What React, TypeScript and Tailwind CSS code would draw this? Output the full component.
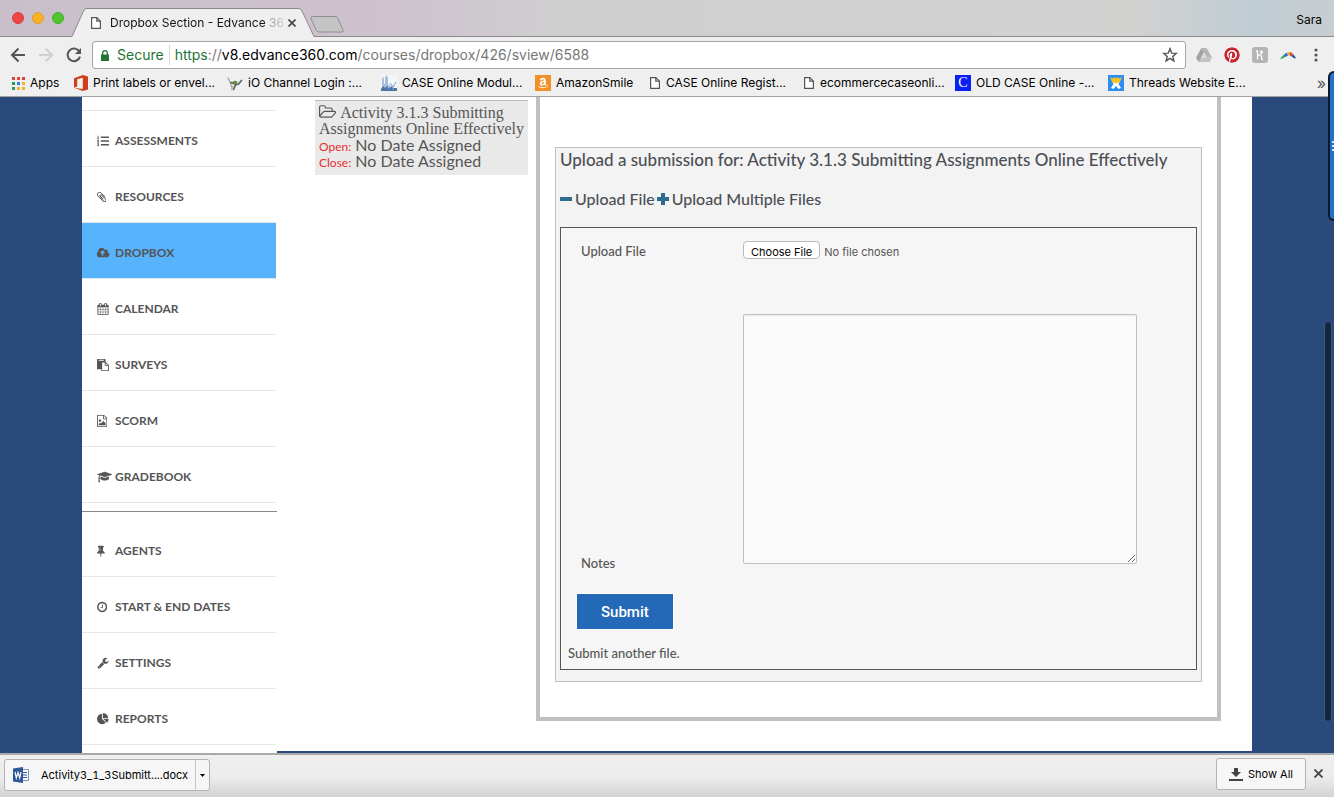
import type { ReactNode } from "react";
import { FaListOl, FaAmazon, FaPinterest } from "react-icons/fa";

type GlyphProps = { d: string; box?: string; className?: string };

function Glyph({ d, box = "0 0 1792 1792", className = "h-3" }: GlyphProps) {
  return (
    <svg viewBox={box} className={className} fill="currentColor" aria-hidden="true">
      <path d={d} />
    </svg>
  );
}

const CLIP =
  "M1596 1385q0 117-79 196t-196 79q-135 0-235-100l-777-776q-113-115-113-271 0-159 110-270t269-111q158 0 273 113l605 606q10 10 10 22 0 16-30.5 46.5t-46.5 30.5q-13 0-23-10l-606-607q-79-77-181-77-106 0-179 75t-73 181q0 105 76 181l776 777q63 63 145 63 64 0 106-42t42-106q0-82-63-145l-581-581q-26-24-60-24-29 0-48 19t-19 48q0 32 25 59l410 410q10 10 10 22 0 16-31 47t-47 31q-12 0-22-10l-410-410q-63-61-63-149 0-82 57-139t139-57q88 0 149 63l581 581q100 98 100 235z";
const IMAGE_FILE =
  "M1596 380q28 28 48 76t20 88v1152q0 40-28 68t-68 28h-1344q-40 0-68-28t-28-68v-1600q0-40 28-68t68-28h896q40 0 88 20t76 48zm-444-244v376h376q-10-29-22-41l-313-313q-12-12-41-22zm384 1528v-1024h-416q-40 0-68-28t-28-68v-416h-768v1536h1280zm-128-448v320h-1024v-192l192-192 128 128 384-384zm-832-192q-80 0-136-56t-56-136 56-136 136-56 136 56 56 136-56 136-136 56z";
const CLOUD =
  "M1216 864q0-14-9-23l-352-352q-9-9-23-9t-23 9l-351 351q-10 12-10 24 0 14 9 23t23 9h224v352q0 13 9.5 22.5t22.5 9.5h192q13 0 22.5-9.5t9.5-22.5v-352h224q13 0 22.5-9.5t9.5-22.5zm640 288q0 159-112.5 271.5t-271.5 112.5h-1088q-185 0-316.5-131.5t-131.5-316.5q0-130 70-240t188-165q-2-30-2-43 0-212 150-362t362-150q156 0 285.5 87t188.5 231q71-62 166-62 106 0 181 75t75 181q0 76-41 138 130 31 213.5 135.5t83.5 238.5z";
const CALENDAR =
  "M192 1664h288v-288h-288v288zm352 0h320v-288h-320v288zm-352-352h288v-320h-288v320zm352 0h320v-320h-320v320zm-352-384h288v-288h-288v288zm736 736h320v-288h-320v288zm-384-736h320v-288h-320v288zm768 736h288v-288h-288v288zm-384-352h320v-320h-320v320zm-352-864v-288q0-13-9.5-22.5t-22.5-9.5h-64q-13 0-22.5 9.5t-9.5 22.5v288q0 13 9.5 22.5t22.5 9.5h64q13 0 22.5-9.5t9.5-22.5zm736 864h288v-320h-288v320zm-384-384h320v-288h-320v288zm384 0h288v-288h-288v288zm32-480v-288q0-13-9.5-22.5t-22.5-9.5h-64q-13 0-22.5 9.5t-9.5 22.5v288q0 13 9.5 22.5t22.5 9.5h64q13 0 22.5-9.5t9.5-22.5zm384-64v1280q0 52-38 90t-90 38h-1408q-52 0-90-38t-38-90v-1280q0-52 38-90t90-38h128v-96q0-66 47-113t113-47h64q66 0 113 47t47 113v96h384v-96q0-66 47-113t113-47h64q66 0 113 47t47 113v96h128q52 0 90 38t38 90z";
const PASTE =
  "M768 1664h896v-640h-416q-40 0-68-28t-28-68v-416h-384v1152zm256-1440v-64q0-13-9.5-22.5t-22.5-9.5h-704q-13 0-22.5 9.5t-9.5 22.5v64q0 13 9.5 22.5t22.5 9.5h704q13 0 22.5-9.5t9.5-22.5zm256 672h299l-299-299v299zm512 128v672q0 40-28 68t-68 28h-960q-40 0-68-28t-28-68v-160h-544q-40 0-68-28t-28-68v-1344q0-40 28-68t68-28h1088q40 0 68 28t28 68v328q21 13 36 28l408 408q28 28 48 76t20 88z";
const CAP =
  "M1774 836l18 316q4 69-82 128t-235 93.5-323 34.5-323-34.5-235-93.5-82-128l18-316 574 181q22 7 48 7t48-7zm530-324q0 23-22 31l-1120 352q-4 1-10 1t-10-1l-652-206q-43 34-71 111.5t-34 178.5q63 36 63 109 0 69-58 107l58 433q2 14-8 25-9 11-24 11h-192q-15 0-24-11-10-11-8-25l58-433q-58-38-58-107 0-73 65-111 11-207 98-330l-333-104q-22-8-22-31t22-31l1120-352q4-1 10-1t10 1l1120 352q22 8 22 31z";
const PIN =
  "M800 864v-448q0-14-9-23t-23-9-23 9-9 23v448q0 14 9 23t23 9 23-9 9-23zm672 352q0 26-19 45t-45 19h-429l-51 483q-2 12-10.5 20.5t-20.5 8.5h-1q-27 0-32-27l-76-485h-404q-26 0-45-19t-19-45q0-123 78.5-221.5t177.5-98.5v-512q-52 0-90-38t-38-90 38-90 90-38h640q52 0 90 38t38 90-38 90-90 38v512q99 0 177.5 98.5t78.5 221.5z";
const CLOCK =
  "M1024 544v448q0 14-9 23t-23 9h-320q-14 0-23-9t-9-23v-64q0-14 9-23t23-9h224v-352q0-14 9-23t23-9h64q14 0 23 9t9 23zm416 352q0-148-73-273t-198-198-273-73-273 73-198 198-73 273 73 273 198 198 273 73 273-73 198-198 73-273zm224 0q0 209-103 385.5t-279.5 279.5-385.5 103-385.5-103-279.5-279.5-103-385.5 103-385.5 279.5-279.5 385.5-103 385.5 103 279.5 279.5 103 385.5z";
const WRENCH =
  "M448 1472q0-26-19-45t-45-19-45 19-19 45 19 45 45 19 45-19 19-45zm644-420l-682 682q-37 37-90 37-52 0-91-37l-106-108q-38-36-38-90 0-53 38-91l681-681q39 98 114.5 173.5t173.5 114.5zm634-435q0 39-23 106-47 134-164.5 217.5t-258.5 83.5q-185 0-316.5-131.5t-131.5-316.5 131.5-316.5 316.5-131.5q58 0 121.5 16.5t107.5 46.5q16 11 16 28t-16 28l-293 169v224l193 107q5-3 79-48.5t135.5-81 70.5-35.5q15 0 23.5 10t8.5 25z";
const PIE =
  "M768 890l546 546q-106 108-247.5 168t-298.5 60q-209 0-385.5-103t-279.5-279.5-103-385.5 103-385.5 279.5-279.5 385.5-103v762zm187 6h773q0 157-60 298.5t-168 247.5zm709-128h-768v-768q209 0 385.5 103t279.5 279.5 103 385.5z";
const FOLDER =
  "M1845 931q0-35-53-35h-1088q-40 0-85.5 21.5t-71.5 52.5l-294 363q-18 24-18 40 0 35 53 35h1088q40 0 86-22t71-53l294-363q18-22 18-39zm-1141-163h768v-160q0-40-28-68t-68-28h-576q-40 0-68-28t-28-68v-64q0-40-28-68t-68-28h-320q-40 0-68 28t-28 68v853l256-315q44-53 116-87.5t140-34.5zm1269 163q0 62-46 120l-295 363q-43 53-116 87.5t-140 34.5h-1088q-92 0-158-66t-66-158v-960q0-92 66-158t158-66h320q92 0 158 66t66 158v32h544q92 0 158 66t66 158v160h192q54 0 99 24.5t67 70.5q15 32 15 68z";

function PageIcon({ className = "h-3.5 w-3" }: { className?: string }) {
  return (
    <svg viewBox="0 0 12 14" className={className} fill="#fff" stroke="#555" strokeWidth="1.2" aria-hidden="true">
      <path d="M1.6 1.6h5.2l3.6 3.6v7.2H1.6z" />
      <path d="M6.8 1.6v3.6h3.6" fill="none" />
    </svg>
  );
}

function AppsIcon() {
  const colors = ["#dc4437", "#dc4437", "#dc4437", "#2e9e58", "#2f7de1", "#f2b32a", "#2e9e58", "#f2b32a", "#f2b32a"];
  return (
    <svg viewBox="0 0 13 13" className="h-[13px] w-[13px]" aria-hidden="true">
      {colors.map((fill, i) => (
        <rect key={i} x={(i % 3) * 5} y={Math.floor(i / 3) * 5} width="3" height="3" fill={fill} />
      ))}
    </svg>
  );
}

function OfficeIcon() {
  return (
    <svg viewBox="0 0 14 16" className="h-4 w-3.5" aria-hidden="true">
      <path fill="#d03f1b" d="M0 3.2 8.8 0 14 1.5v13L8.800 16 0 12.8l8.800 1.1V2.800L3.200 4.200v7.200L0 12.800z" />
    </svg>
  );
}

function ChannelIcon() {
  return (
    <svg viewBox="0 0 16 16" className="h-4 w-4" fill="none" strokeLinecap="round" aria-hidden="true">
      <path d="M1 3c1.500 2 2.500 4 3.500 9" stroke="#999" strokeWidth="1.200" />
      <path d="M14.500 5.500l-3 3.500-3 1-2 4.500" stroke="#666" strokeWidth="1.800" />
      <path d="M4 7.500l4 1.500" stroke="#555" strokeWidth="1.500" />
      <ellipse cx="8" cy="7.500" rx="2.500" ry="1.800" fill="#5f9136" />
      <path d="M6 11 4.500 14.500" stroke="#b9b9b9" strokeWidth="1.500" />
    </svg>
  );
}

function SkylineIcon() {
  return (
    <svg viewBox="0 0 16 16" className="h-4 w-4" aria-hidden="true">
      <path fill="#f3f6fa" d="M0 0h16v16H0z" />
      <path fill="#a9bfd8" d="M1 16V4l1-3 1 3v5h1V2l1.500-2L7 3v7h2v6z" />
      <path fill="#4b74a8" d="M0 16v-2l2-3 2 2 2-2 2 3 2-3 2 2h4v3z" />
      <path stroke="#7f9cc0" d="M9 8l3 4 3-5M12 12v3" fill="none" />
    </svg>
  );
}

function ThreadsIcon() {
  return (
    <svg viewBox="0 0 16 16" className="h-4 w-4" aria-hidden="true">
      <path fill="#2c8df5" d="M0 0h16v16H0z" />
      <path fill="#fff" d="M4 6h8l-1.500 3L13 13l-2.500 1L8 11l-2.500 3L3 13l2.500-4z" />
      <path fill="#f9c21c" d="M2 2l3 1.500L6.500 2 8 3.500 9.500 2 11 3.500 14 2l-2 5-4 1.500L4 7z" />
    </svg>
  );
}

const bookmarks: { label: string; icon: ReactNode; width: string }[] = [
  { label: "Apps", icon: <AppsIcon />, width: "w-[62px]" },
  { label: "Print labels or envel...", icon: <OfficeIcon />, width: "w-[153px]" },
  { label: "iO Channel Login :...", icon: <ChannelIcon />, width: "w-[154px]" },
  { label: "CASE Online Modul...", icon: <SkylineIcon />, width: "w-[154px]" },
  {
    label: "AmazonSmile",
    icon: (
      <span className="flex h-4 w-4 items-center justify-center bg-[#f29027] text-white">
        <FaAmazon className="h-3 w-3" />
      </span>
    ),
    width: "w-[114px]",
  },
  { label: "CASE Online Regist...", icon: <PageIcon />, width: "w-[154px]" },
  { label: "ecommercecaseonli...", icon: <PageIcon />, width: "w-[152px]" },
  {
    label: "OLD CASE Online -...",
    icon: (
      <span className="flex h-4 w-4 items-center justify-center bg-[#0a21f5] font-['Liberation_Serif',serif] text-sm leading-4 text-white">
        C
      </span>
    ),
    width: "w-[153px]",
  },
  { label: "Threads Website E...", icon: <ThreadsIcon />, width: "w-[150px]" },
];

function TabStrip() {
  return (
    <div className="relative flex h-[37px] items-end border-b border-[#8a888b] bg-[linear-gradient(90deg,#c9bfca_0%,#cdc2ce_30%,#d0cfd0_42%,#d1d1d0_85%,#c0cdd4_94%,#c8cdd0_100%)]">
      <div className="flex w-[72px] gap-2 self-center pl-3">
        <span className="h-3 w-3 rounded-full border border-[#d93c3c] bg-[#ec4644]" />
        <span className="h-3 w-3 rounded-full border border-[#e0a024] bg-[#f6b128]" />
        <span className="h-3 w-3 rounded-full border border-[#43b02c] bg-[#52c42f]" />
      </div>
      <div className="relative -mb-px flex h-[29px] w-[242px] items-center">
        <svg viewBox="0 0 242 29" className="absolute inset-0 h-full w-full" aria-hidden="true">
          <path d="M0 28.500 11.500 3Q12.500.5 15 .5H226q3 0 4 2.500L242 28.500V29H0z" fill="#efefef" />
          <path d="M0 28.500 11.500 3Q12.500.5 15 .5H226q3 0 4 2.500L242 28.500" fill="none" stroke="#8a888b" />
        </svg>
        <div className="relative flex w-full items-center pr-4 pl-[18px]">
          <PageIcon className="h-3.5 w-3" />
          <span className="ml-2 w-[174px] overflow-hidden bg-[linear-gradient(90deg,#111_88%,#999_92%,#ccc_100%)] bg-clip-text text-xs leading-4 whitespace-nowrap text-transparent">
            Dropbox Section - Edvance 36
          </span>
          <button type="button" aria-label="Close tab" className="ml-1">
            <svg viewBox="0 0 8 8" className="h-2 w-2" stroke="#444" strokeWidth="1.600" aria-hidden="true">
              <path d="M.5.5l7 7M7.500.5l-7 7" />
            </svg>
          </button>
        </div>
      </div>
      <button type="button" aria-label="New tab" className="mb-[3px] -ml-1">
        <svg viewBox="0 0 34 17" className="h-[17px] w-[34px]" fill="#c4c4c4" stroke="#8e8e8e" aria-hidden="true">
          <path d="M2.500.5H25q2 0 3 2l5 11.500q1 2-1 2H9q-2 0-3-2L1 2.500Q.5.5 2.500.5z" />
        </svg>
      </button>
      <span className="mr-3 mb-2 ml-auto text-xs leading-4 text-black">Sara</span>
    </div>
  );
}

function Toolbar() {
  return (
    <div className="flex h-9 items-center pr-3 pl-2.5">
      <div className="flex w-[82px] items-center gap-3 text-[#555]">
        <button type="button" aria-label="Back">
          <svg viewBox="0 0 16 16" className="h-4 w-4" fill="none" stroke="#555" strokeWidth="2" aria-hidden="true">
            <path d="M15 8H2.500M8.500 1.500 2 8l6.500 6.500" />
          </svg>
        </button>
        <button type="button" aria-label="Forward">
          <svg viewBox="0 0 16 16" className="h-4 w-4" fill="none" stroke="#cfcfcf" strokeWidth="2" aria-hidden="true">
            <path d="M1 8h12.500M7.500 1.500 14 8l-6.500 6.500" />
          </svg>
        </button>
        <button type="button" aria-label="Reload">
          <svg viewBox="0 0 16 16" className="h-4 w-4" fill="none" stroke="#555" strokeWidth="2" aria-hidden="true">
            <path d="M13.600 5A6.300 6.300 0 1 0 14 9.600" />
            <path d="M15 1v6H9z" fill="#555" stroke="none" />
          </svg>
        </button>
      </div>
      <div className="flex h-7 flex-1 items-center rounded-[3px] border border-[#a6a6a6] bg-white pr-[7px] pl-2 text-sm leading-5">
        <svg viewBox="0 0 8 11" className="h-[11px] w-2" aria-hidden="true">
          <path d="M0 4.500h8V11H0z" fill="#257436" />
          <path d="M1.700 5V3a2.300 2.300 0 0 1 4.600 0v2" fill="none" stroke="#257436" strokeWidth="1.300" />
        </svg>
        <span className="ml-2 text-[#257436]">Secure</span>
        <span className="mx-[5px] h-5 w-px bg-[#dcdcdc]" />
        <span className="flex-1 whitespace-nowrap text-[#777]">
          <span className="text-[#257436]">https</span>://<span className="text-black">v8.edvance360.com</span>
          /courses/dropbox/426/sview/6588
        </span>
        <svg viewBox="0 0 16 16" className="h-4 w-4" fill="none" stroke="#555" strokeWidth="1.400" aria-hidden="true">
          <path d="M8 1.800l1.700 4.300 4.600.3-3.500 3 1.100 4.500L8 11.400l-3.900 2.500 1.100-4.500-3.500-3 4.600-.3z" />
        </svg>
      </div>
      <div className="ml-2.5 flex items-center gap-3">
        <svg viewBox="0 0 16 14" className="h-3.5 w-4" aria-hidden="true">
          <path fill="#b5b5b5" d="M5.500 0h5L16 9.500H10.800z" />
          <path fill="#a2a2a2" d="M5.500 0 8 4.500 2.600 14 0 9.500z" />
          <path fill="#c3c3c3" d="M5.200 9.500H16L13.400 14H2.600z" />
          <path fill="#dcdcdc" d="M8 5.500l2.300 4H5.700z" />
        </svg>
        <FaPinterest className="h-4 w-4 rounded-full bg-white text-[#c8232c]" />
        <svg viewBox="0 0 16 16" className="h-4 w-4" aria-hidden="true">
          <rect width="16" height="16" rx="3" fill="#b4b4b4" />
          <path
            d="M5.500 3.500v9M4 4.200l1.500-.7M5.500 9.500c1.500-2.500 4-2.500 4 0v2q0 1 1.500 1M8 5h3M9.500 3.500v3.500"
            fill="none"
            stroke="#fff"
            strokeWidth="1.300"
          />
        </svg>
        <svg viewBox="0 0 16 9" className="h-[9px] w-4" aria-hidden="true">
          <path fill="#35a853" d="M0 8.500Q1 6 3.500 4L5.500 6Q3 7 0 8.500z" />
          <path fill="#2a6fdb" d="M3.500 4Q5 2.500 7 1.500L8 4.500 5.500 6z" />
          <path fill="#f4b52a" d="M7 1.500Q8.500.8 10 1L9.500 4.500H8z" />
          <path fill="#e24a33" d="M10 1q2 .3 3 2L11.500 5.500 9.500 4.500z" />
          <path fill="#2b5d9b" d="M13 3q2 2 3 4l-1.500.5-3-2z" />
        </svg>
        <button type="button" aria-label="Menu" className="ml-0.5 px-1">
          <svg viewBox="0 0 4 14" className="h-3.5 w-1" fill="#555" aria-hidden="true">
            <circle cx="2" cy="2" r="1.600" />
            <circle cx="2" cy="7" r="1.600" />
            <circle cx="2" cy="12" r="1.600" />
          </svg>
        </button>
      </div>
    </div>
  );
}

function BookmarkBar() {
  return (
    <nav aria-label="Bookmarks" className="flex h-[23px] items-start pr-2 pl-3">
      <div className="flex min-w-0 flex-1 overflow-hidden">
        {bookmarks.map((b) => (
          <a
            key={b.label}
            href="#"
            className={`flex h-5 shrink-0 items-center gap-[5px] text-xs whitespace-nowrap text-black ${b.width}`}
          >
            {b.icon}
            {b.label}
          </a>
        ))}
      </div>
      <button type="button" aria-label="More bookmarks" className="text-base leading-5 text-[#555]">
        »
      </button>
    </nav>
  );
}

type Item = { label: string; icon: ReactNode; active?: boolean };

const courseItems: Item[] = [
  { label: "Assessments", icon: <FaListOl className="h-3 w-3" /> },
  { label: "Resources", icon: <Glyph d={CLIP} box="192 0 1408 1792" /> },
  { label: "Dropbox", icon: <Glyph d={CLOUD} box="0 0 1920 1792" />, active: true },
  { label: "Calendar", icon: <Glyph d={CALENDAR} /> },
  { label: "Surveys", icon: <Glyph d={PASTE} /> },
  { label: "SCORM", icon: <Glyph d={IMAGE_FILE} box="128 0 1536 1792" /> },
  { label: "Gradebook", icon: <Glyph d={CAP} box="0 0 2304 1792" /> },
];

const adminItems: Item[] = [
  { label: "Agents", icon: <Glyph d={PIN} box="320 0 1152 1792" /> },
  { label: "Start & End Dates", icon: <Glyph d={CLOCK} box="128 0 1536 1792" /> },
  { label: "Settings", icon: <Glyph d={WRENCH} /> },
  { label: "Reports", icon: <Glyph d={PIE} /> },
];

function MenuItem({ label, icon, active }: Item) {
  return (
    <li className={`border-b border-[#e7e7e7] ${active ? "bg-[#57b3fb]" : ""}`}>
      <a href="#" className="flex h-[55px] items-center pt-1 pl-[15px] text-xs font-bold text-[#555] uppercase">
        <span className="flex w-[18px] items-center">{icon}</span>
        {label}
      </a>
    </li>
  );
}

function Sidebar() {
  return (
    <nav aria-label="Course menu" className="w-[195px] shrink-0 self-stretch bg-white">
      <ul className="mr-px mt-[13px] border-t border-[#e7e7e7]">
        {courseItems.map((item) => (
          <MenuItem key={item.label} {...item} />
        ))}
      </ul>
      <hr className="mt-2 mb-[9px] border-[#888]" />
      <ul className="mr-px">
        {adminItems.map((item) => (
          <MenuItem key={item.label} {...item} />
        ))}
      </ul>
    </nav>
  );
}

function ActivityCard() {
  return (
    <aside className="mt-[3px] ml-[38px] w-[213px] shrink-0 self-start border-t border-[#bbb] bg-[#e9e9e9] px-1 pt-[3px] pb-1.5 text-base leading-4 text-[#555]">
      <a href="#" className="block font-['Liberation_Serif',serif]">
        <Glyph d={FOLDER} box="64 0 1920 1792" className="mr-1 inline h-4 align-[-2px]" />
        Activity 3.1.3 Submitting Assignments Online Effectively
      </a>
      <p className="h-4">
        <span className="text-xs leading-none text-[#e62e2e]">Open:</span> No Date Assigned
      </p>
      <p className="h-4">
        <span className="text-xs leading-none text-[#e62e2e]">Close:</span> No Date Assigned
      </p>
    </aside>
  );
}

function UploadForm() {
  return (
    <form className="border border-[#555] bg-[#f6f6f6] font-medium text-[#555]" onSubmit={(e) => e.preventDefault()}>
      <div className="grid grid-cols-[162px_1fr] pt-[13px] pr-[59px] pl-5 text-[13px]">
        <label htmlFor="file" className="leading-5">
          Upload File
        </label>
        <input
          id="file"
          type="file"
          className="h-[22px] font-['Inter','Liberation_Sans',sans-serif] text-[11px] leading-5 font-normal text-[#555] file:mr-1 file:h-[18px] file:rounded file:border file:border-[#b9b9b9] file:bg-white file:px-[7px] file:py-0 file:text-[11px] file:font-normal file:text-black"
        />
        <label htmlFor="notes" className="-mb-[9px] self-end leading-5">
          Notes
        </label>
        <textarea
          id="notes"
          className="mt-[51px] block h-[250px] w-full resize rounded-xs border border-[#bfbfbf] bg-[#fafafa] shadow-[inset_0_1px_1px_#e8e8e8]"
        />
      </div>
      <button
        type="submit"
        className="mt-[29px] ml-[15px] block h-[37px] border border-white bg-[#2469b7] px-6 font-['Roboto',sans-serif] text-[15px] leading-5 font-medium text-white"
      >
        Submit
      </button>
      <p className="mt-[13px] mb-1.5 ml-[7px] text-[13px] leading-5">Submit another file.</p>
    </form>
  );
}

function SubmissionPanel() {
  return (
    <main className="mr-[31px] mb-[30px] ml-2 min-w-0 flex-1 border-4 border-t-0 border-[#c0c0c0] px-[15px] pt-[50px] pb-[35px]">
      <section className="border border-[#bfbfbf] bg-[#f3f3f3] px-1 pb-[11px] font-medium text-[#4b4f55]">
        <h1 className="pt-0.5 text-[17px] leading-5 font-medium">
          Upload a submission for: Activity 3.1.3 Submitting Assignments Online Effectively
        </h1>
        <div className="mt-[17px] mb-4 flex h-6 items-center text-base">
          <a href="#" className="flex items-center gap-[3px]">
            <svg viewBox="0 0 12 12" className="h-3 w-3" fill="#2b6c8f" aria-hidden="true">
              <path d="M0 4h12v4H0z" />
            </svg>
            Upload File
          </a>
          <a href="#" className="ml-0.5 flex items-center gap-[3px]">
            <svg viewBox="0 0 12 12" className="h-3 w-3" fill="#2b6c8f" aria-hidden="true">
              <path d="M0 4h4V0h4v4h4v4H8v4H4V8H0z" />
            </svg>
            Upload Multiple Files
          </a>
        </div>
        <UploadForm />
      </section>
    </main>
  );
}

function DownloadBar() {
  return (
    <footer className="flex h-[44px] shrink-0 items-start border-t-2 border-[#a9a9a9] bg-[linear-gradient(180deg,#efefef_0%,#ececec_55%,#d2d2d2_100%)] pt-1 pr-[11px] pl-1 font-['Inter','Liberation_Sans',sans-serif] text-[11px] text-black">
      <div className="flex h-8 w-[206px] items-center rounded-[3px] border border-[#b3b3b3] bg-[#f6f6f6]">
        <button type="button" className="flex h-full flex-1 items-center gap-3 pl-2 tabular-nums">
          <svg viewBox="0 0 16 16" className="h-4 w-4" aria-hidden="true">
            <path fill="#fff" stroke="#7c93bd" d="M7.500 2.500h8v11h-8z" />
            <path stroke="#2b5797" d="M10 5.500h4M10 8h4M10 10.500h4" />
            <path fill="#2b5797" d="M0 1.500 10 0v16L0 14.500z" />
            <path fill="none" stroke="#fff" strokeWidth="1.200" d="M2 5l1.300 6L5 5.500 6.700 11 8 5" />
          </svg>
          Activity3_1_3Submitt....docx
        </button>
        <button type="button" aria-label="Download options" className="flex h-full items-center border-l border-[#c8c8c8] px-1">
          <svg viewBox="0 0 5 3" className="h-[3px] w-[5px]" aria-hidden="true">
            <path d="M0 0h5L2.500 3z" />
          </svg>
        </button>
      </div>
      <button
        type="button"
        className="-mt-px ml-auto flex h-8 items-center gap-[5px] rounded-[3px] border border-[#b3b3b3] bg-[#f6f6f6] px-3"
      >
        <svg viewBox="0 0 14 13" className="h-[13px] w-3.5" fill="#444" aria-hidden="true">
          <path d="M5 0h4v4h3L7 9 2 4h3zM0 11h14v2H0z" />
        </svg>
        Show All
      </button>
      <button type="button" aria-label="Close downloads" className="mt-2.5 ml-2">
        <svg viewBox="0 0 9 9" className="h-[9px] w-[9px]" stroke="#444" strokeWidth="1.800" aria-hidden="true">
          <path d="M.5.5l8 8M8.500.5l-8 8" />
        </svg>
      </button>
    </footer>
  );
}

export default function App() {
  return (
    <div className="relative flex h-screen flex-col overflow-hidden bg-[#294a7a] font-['Lato',sans-serif]">
      <header className="shrink-0 border-b border-[#a3a3a3] bg-[#efefef] font-['Inter','Liberation_Sans',sans-serif]">
        <TabStrip />
        <Toolbar />
        <BookmarkBar />
      </header>
      <div className="flex min-h-0 flex-1 justify-center overflow-hidden">
        <div className="flex w-full max-w-[1170px]">
          <Sidebar />
          <div className="flex min-w-0 flex-1 self-start bg-white">
            <ActivityCard />
            <SubmissionPanel />
          </div>
        </div>
      </div>
      <DownloadBar />
      <div className="absolute top-[71px] right-0 flex h-[150px] w-1.5 items-center justify-end rounded-l-md border-2 border-r-0 border-[#0a1a30] bg-[#2571c8]">
        <span className="h-2.5 w-0.5 bg-[repeating-linear-gradient(180deg,#dce6f2_0_2px,#2571c8_2px_4px)]" />
      </div>
      <div className="absolute top-[321px] right-0.5 h-[401px] w-2 rounded-full border border-[#38578a] bg-[#16263a]" />
    </div>
  );
}
